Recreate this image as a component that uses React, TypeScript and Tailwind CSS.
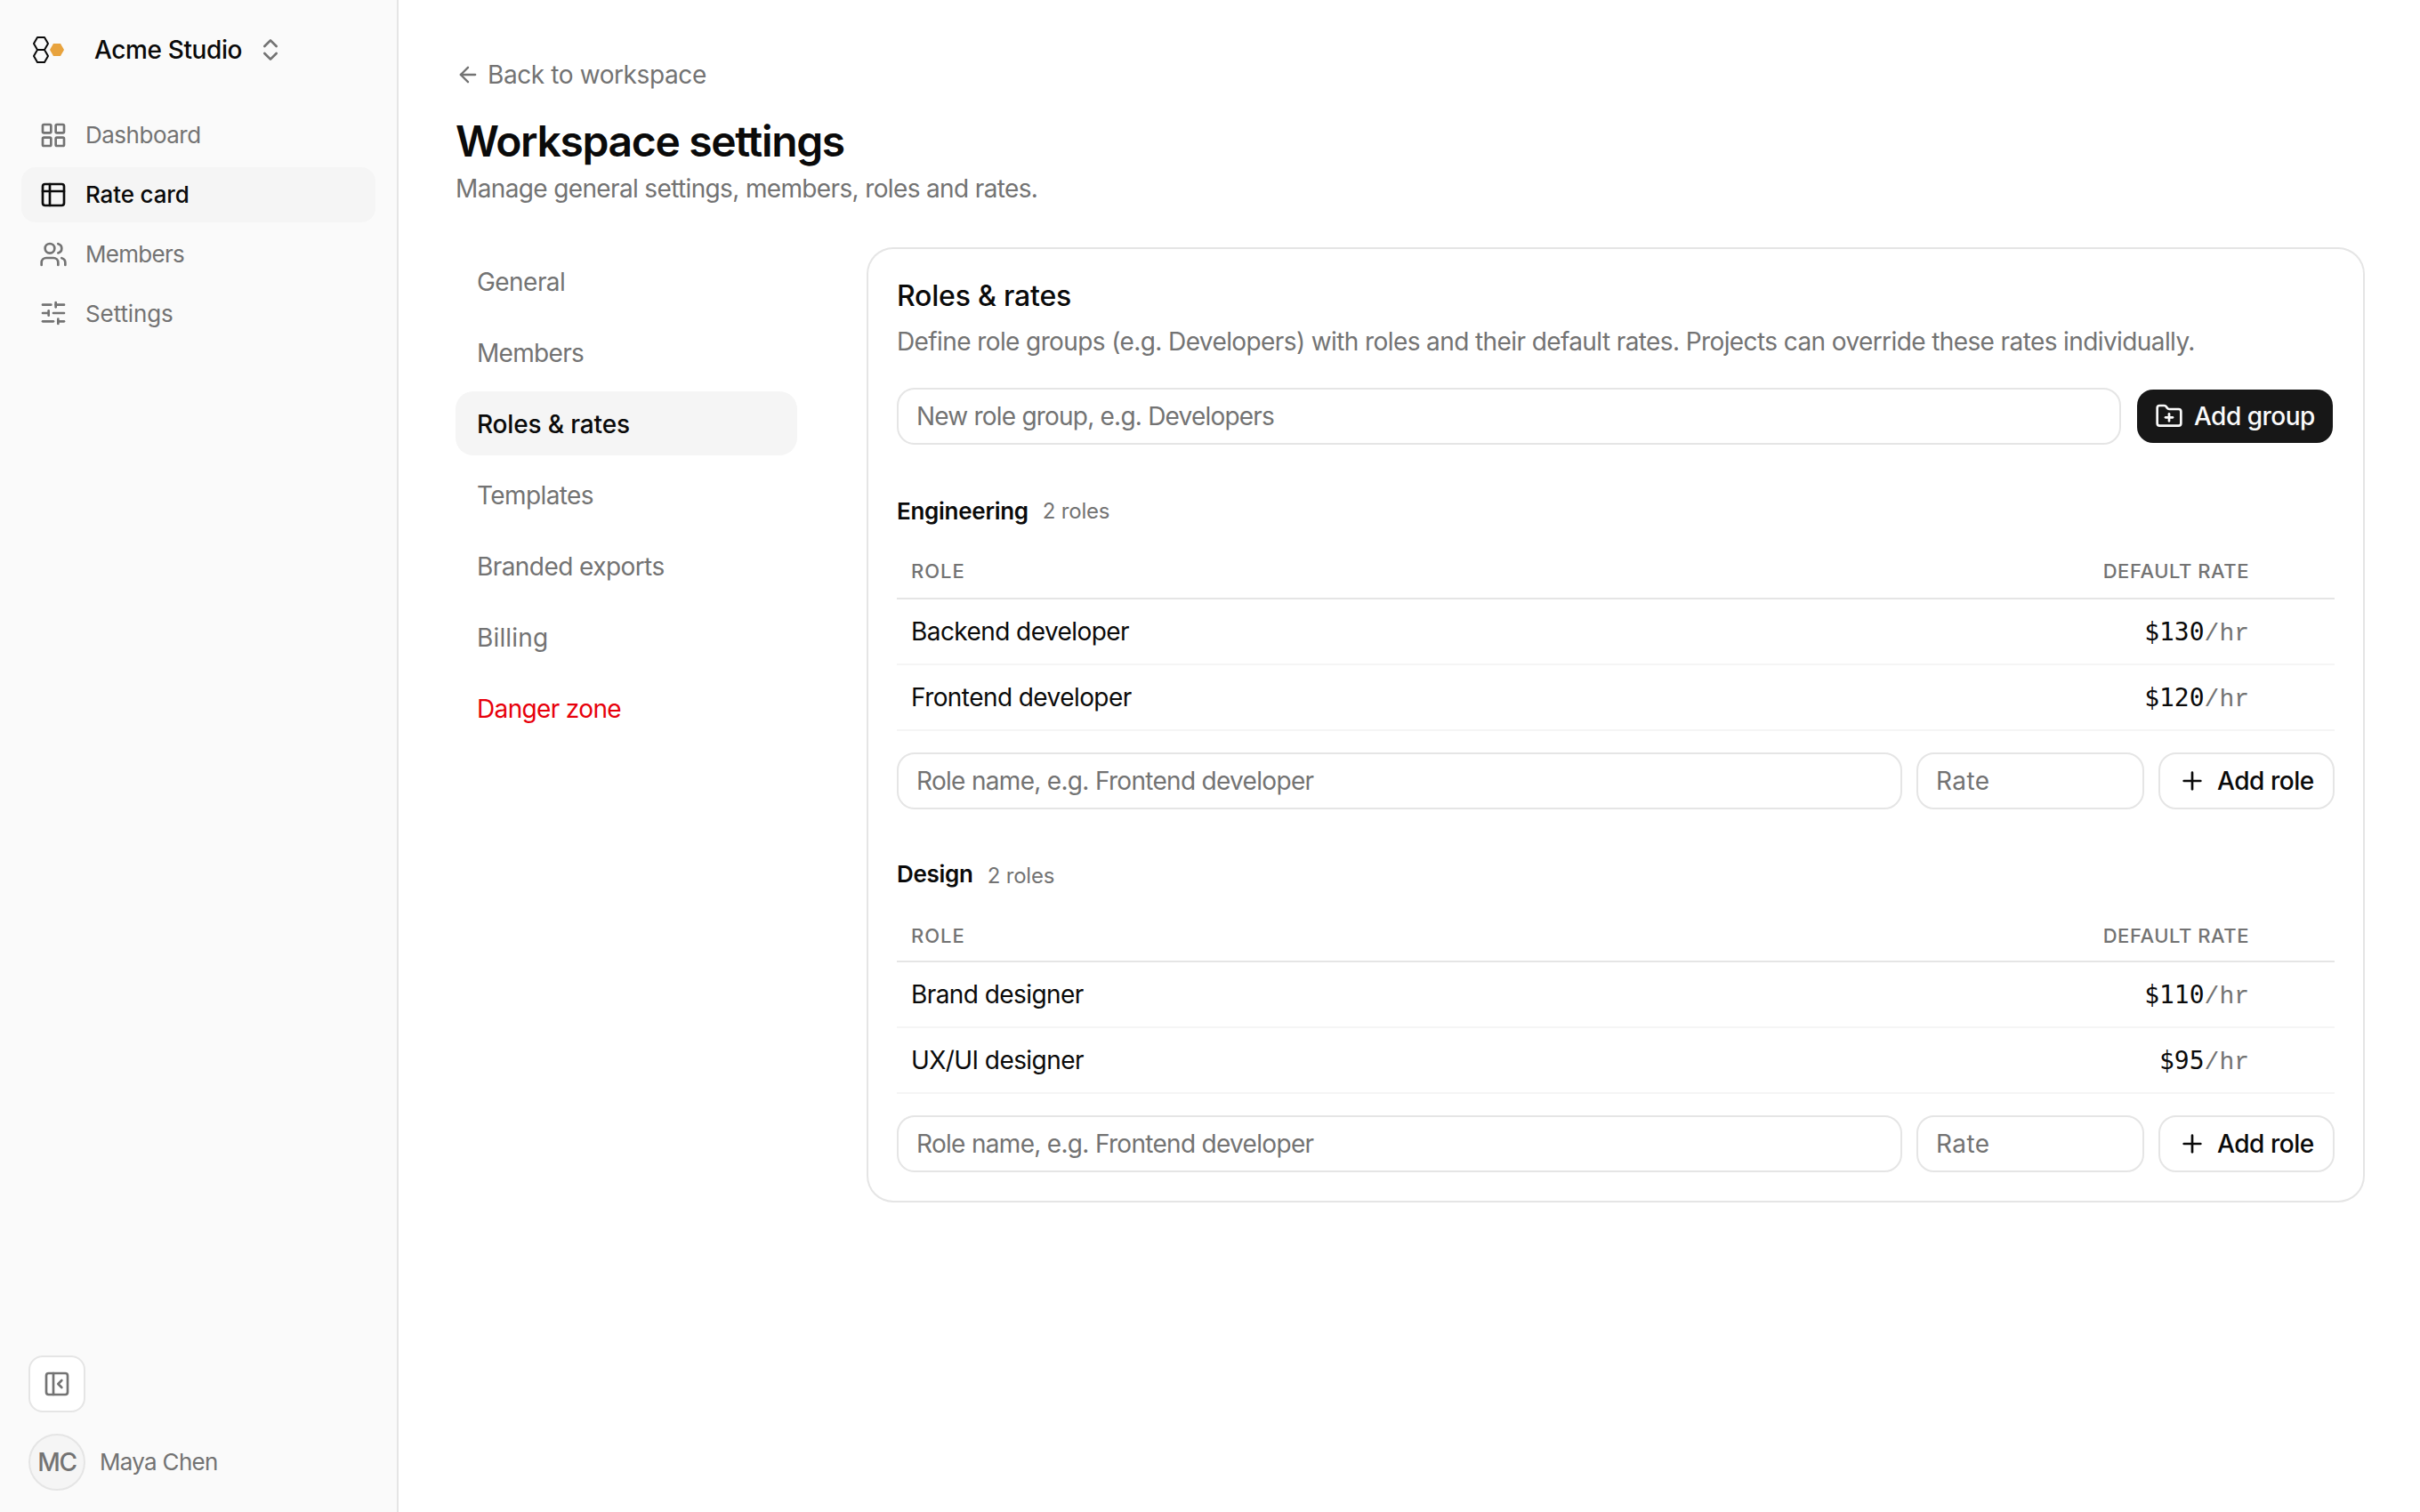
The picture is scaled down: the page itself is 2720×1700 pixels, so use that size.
import React from "react";
import {
	ArrowLeft,
	ChevronsUpDown,
	FolderPlus,
	LayoutGrid,
	PanelLeftClose,
	Plus,
	SlidersHorizontal,
	Users,
} from "lucide-react";
import clsx from "clsx";

const navItems = [
	{ label: "Dashboard", icon: LayoutGrid, tracking: "tracking-[-0.5px]" },
	{
		label: "Rate card",
		icon: RateCardIcon,
		tracking: "tracking-[-0.15px]",
		active: true,
	},
	{ label: "Members", icon: Users, tracking: "tracking-[-0.7px]" },
	{
		label: "Settings",
		icon: SlidersHorizontal,
		tracking: "tracking-[-0.1px]",
		textClass: "pt-px",
	},
];

const tabs = [
	{ label: "General", tracking: "tracking-[-0.55px]" },
	{ label: "Members", tracking: "tracking-[-0.69px]" },
	{ label: "Roles & rates", tracking: "tracking-[-0.15px]", active: true },
	{ label: "Templates", tracking: "tracking-[-0.6px]" },
	{ label: "Branded exports", tracking: "tracking-[-0.57px]" },
	{ label: "Billing", tracking: "tracking-[0.15px]" },
	{ label: "Danger zone", tracking: "tracking-[-0.65px]", danger: true },
];

const groups = [
	{
		name: "Engineering",
		roles: [
			{ name: "Backend developer", rate: 130 },
			{ name: "Frontend developer", rate: 120 },
		],
		className: "mt-14",
		countClass: "pt-0.5",
		headClass: "pb-4",
	},
	{
		name: "Design",
		roles: [
			{ name: "Brand designer", rate: 110 },
			{ name: "UX/UI designer", rate: 95 },
		],
		className: "mt-[54px]",
		countClass: "pt-1.5",
		headClass: "pb-3.5",
	},
];

function RateCardIcon({ className }: { className?: string }) {
	return (
		<svg
			viewBox="0 0 24 24"
			fill="none"
			stroke="currentColor"
			strokeWidth="2"
			strokeLinecap="round"
			strokeLinejoin="round"
			className={className}
		>
			<rect x="3" y="3" width="18" height="18" rx="2" />
			<path d="M3 9h18" />
			<path d="M9 3v18" />
		</svg>
	);
}

const Logo = () => (
	<svg
		viewBox="0 0 48 48"
		className="size-12 shrink-0"
		fill="none"
		strokeLinejoin="round"
	>
		<path
			d="M10 10h8l4 7-4 7h-8l-4-7zM10 24h8l4 7-4 7h-8l-4-7z"
			stroke="#0a0a0a"
			strokeWidth="2"
		/>
		<path d="M28 17h8l4 7-4 7h-8l-4-7z" fill="#e8a33d" />
	</svg>
);

const Sidebar = () => (
	<aside className="flex w-[448px] shrink-0 flex-col border-r-2 border-[#e5e5e5] bg-[#fafafa] pt-6 pb-6">
		<div className="flex h-16 items-center pl-8">
			<Logo />
			<span className="ml-[26px] text-[28px] font-medium tracking-[-0.38px]">
				Acme Studio
			</span>
			<ChevronsUpDown className="ml-4 size-8 text-[#737373]" />
		</div>

		<nav className="mt-[33px] flex flex-col gap-1 px-6">
			{navItems.map(
				({ label, icon: Icon, tracking, active, textClass }) => (
					<a
						key={label}
						className={clsx(
							"flex h-[62.67px] items-center gap-5 rounded-[16px] px-5 text-[26px]",
							tracking,
							active
								? "bg-[#f5f5f5] font-medium"
								: "text-[#737373]"
						)}
					>
						<Icon className="size-8" />
						<span className={textClass || "pb-px"}>{label}</span>
					</a>
				)
			)}
		</nav>

		<div className="mt-auto flex flex-col gap-6 px-8">
			<button className="flex size-16 items-center justify-center rounded-[16px] border-2 border-[#e5e5e5] bg-white text-[#737373]">
				<PanelLeftClose className="size-8" />
			</button>
			<div className="flex items-center gap-4 text-[#737373]">
				<span className="flex size-16 items-center justify-center rounded-full border-2 border-[#e5e5e5] bg-[#f5f5f5] text-[28px] font-medium tracking-[-1.2px]">
					MC
				</span>
				<span className="pb-0.5 text-[26px] tracking-[-0.7px]">
					Maya Chen
				</span>
			</div>
		</div>
	</aside>
);

interface FieldProps {
	placeholder: string;
	className?: string;
}

const Field: React.FC<FieldProps> = ({ placeholder, className }) => (
	<input
		placeholder={placeholder}
		className={clsx(
			"h-16 min-w-0 rounded-[20px] border-2 border-[#e5e5e5] bg-white px-5 text-[28px] placeholder:text-[#737373]",
			className
		)}
	/>
);

interface RoleGroupProps {
	group: (typeof groups)[number];
}

const RoleGroup: React.FC<RoleGroupProps> = ({ group }) => (
	<section className={group.className}>
		<div className="flex h-9 items-center gap-4">
			<h3 className="pt-0.5 text-[26px] leading-9 font-semibold tracking-[-0.28px]">
				{group.name}
			</h3>
			<span
				className={clsx(
					"text-[24px] leading-9 tracking-[-0.2px] text-[#737373]",
					group.countClass
				)}
			>
				{group.roles.length} roles
			</span>
		</div>

		<div
			className={clsx(
				"flex h-[82px] items-end justify-between border-b-2 border-[#e5e5e5] pr-24 pl-4 text-[22px] leading-7 font-medium text-[#737373]",
				group.headClass
			)}
		>
			<span className="tracking-[1px]">ROLE</span>
			<span className="tracking-[0.55px]">DEFAULT RATE</span>
		</div>
		{group.roles.map((role) => (
			<div
				key={role.name}
				className="flex h-[74px] items-center justify-between border-b-2 border-[#f5f5f5] pr-24 pl-4 text-[28px]"
			>
				<span className="tracking-[-0.57px]">{role.name}</span>
				<span className="pt-[3px] font-['DejaVu_Sans_Mono',monospace]">
					${role.rate}
					<span className="font-['Liberation_Mono',monospace] text-[#737373]">
						/hr
					</span>
				</span>
			</div>
		))}

		<div className="mt-6 flex gap-4">
			<Field
				placeholder="Role name, e.g. Frontend developer"
				className="flex-1 tracking-[-0.69px]"
			/>
			<Field placeholder="Rate" className="w-64 tracking-[0.4px]" />
			<button className="flex h-16 w-[198px] items-center gap-3 rounded-[20px] border-2 border-[#e5e5e5] bg-white pl-5 text-[28px] font-medium tracking-[-0.45px] whitespace-nowrap">
				<Plus className="size-8 shrink-0" />
				Add role
			</button>
		</div>
	</section>
);

export default function App() {
	return (
		<div className="flex h-[1700px] w-[2720px] overflow-hidden bg-white font-['Inter',sans-serif] text-[#0a0a0a]">
			<Sidebar />

			<main className="flex-1 p-16">
				<a className="flex h-10 items-center gap-2 text-[28px] tracking-[-0.4px] text-[#737373]">
					<ArrowLeft className="size-7" />
					Back to workspace
				</a>
				<h1 className="mt-6 text-[48px] leading-[61px] font-semibold tracking-[-1.35px]">
					Workspace settings
				</h1>
				<p className="mt-[3px] text-[28px] leading-10 tracking-[-0.64px] text-[#737373]">
					Manage general settings, members, roles and rates.
				</p>

				<div className="mt-12 flex items-start gap-20">
					<nav className="flex w-96 shrink-0 flex-col gap-2">
						{tabs.map((tab) => (
							<a
								key={tab.label}
								className={clsx(
									"flex h-[72px] items-center rounded-[20px] px-6 pt-px text-[28px]",
									tab.tracking,
									tab.active
										? "bg-[#f5f5f5] font-medium"
										: tab.danger
											? "text-[#e7000b]"
											: "text-[#737373]"
								)}
							>
								{tab.label}
							</a>
						))}
					</nav>

					<div className="flex-1 rounded-[28px] bg-white px-8 pt-[31px] pb-8 ring-2 ring-[#e5e5e5]">
						<h2 className="text-[32px] leading-[44px] font-medium tracking-[-0.2px]">
							Roles &amp; rates
						</h2>
						<p className="mt-[9px] text-[28px] leading-10 tracking-[-0.6px] text-[#737373]">
							Define role groups (e.g. Developers) with roles and
							their default rates. Projects can override these
							rates individually.
						</p>
						<div className="mt-8 flex gap-4">
							<Field
								placeholder="New role group, e.g. Developers"
								className="flex-1 tracking-[-0.79px]"
							/>
							<button className="flex h-16 w-56 items-center gap-3 rounded-[20px] border-2 border-transparent bg-[#171717] bg-clip-padding pl-5 text-[28px] font-medium tracking-[-0.51px] whitespace-nowrap text-[#fafafa]">
								<FolderPlus className="size-8 shrink-0" />
								Add group
							</button>
						</div>

						{groups.map((group) => (
							<RoleGroup key={group.name} group={group} />
						))}
					</div>
				</div>
			</main>
		</div>
	);
}
